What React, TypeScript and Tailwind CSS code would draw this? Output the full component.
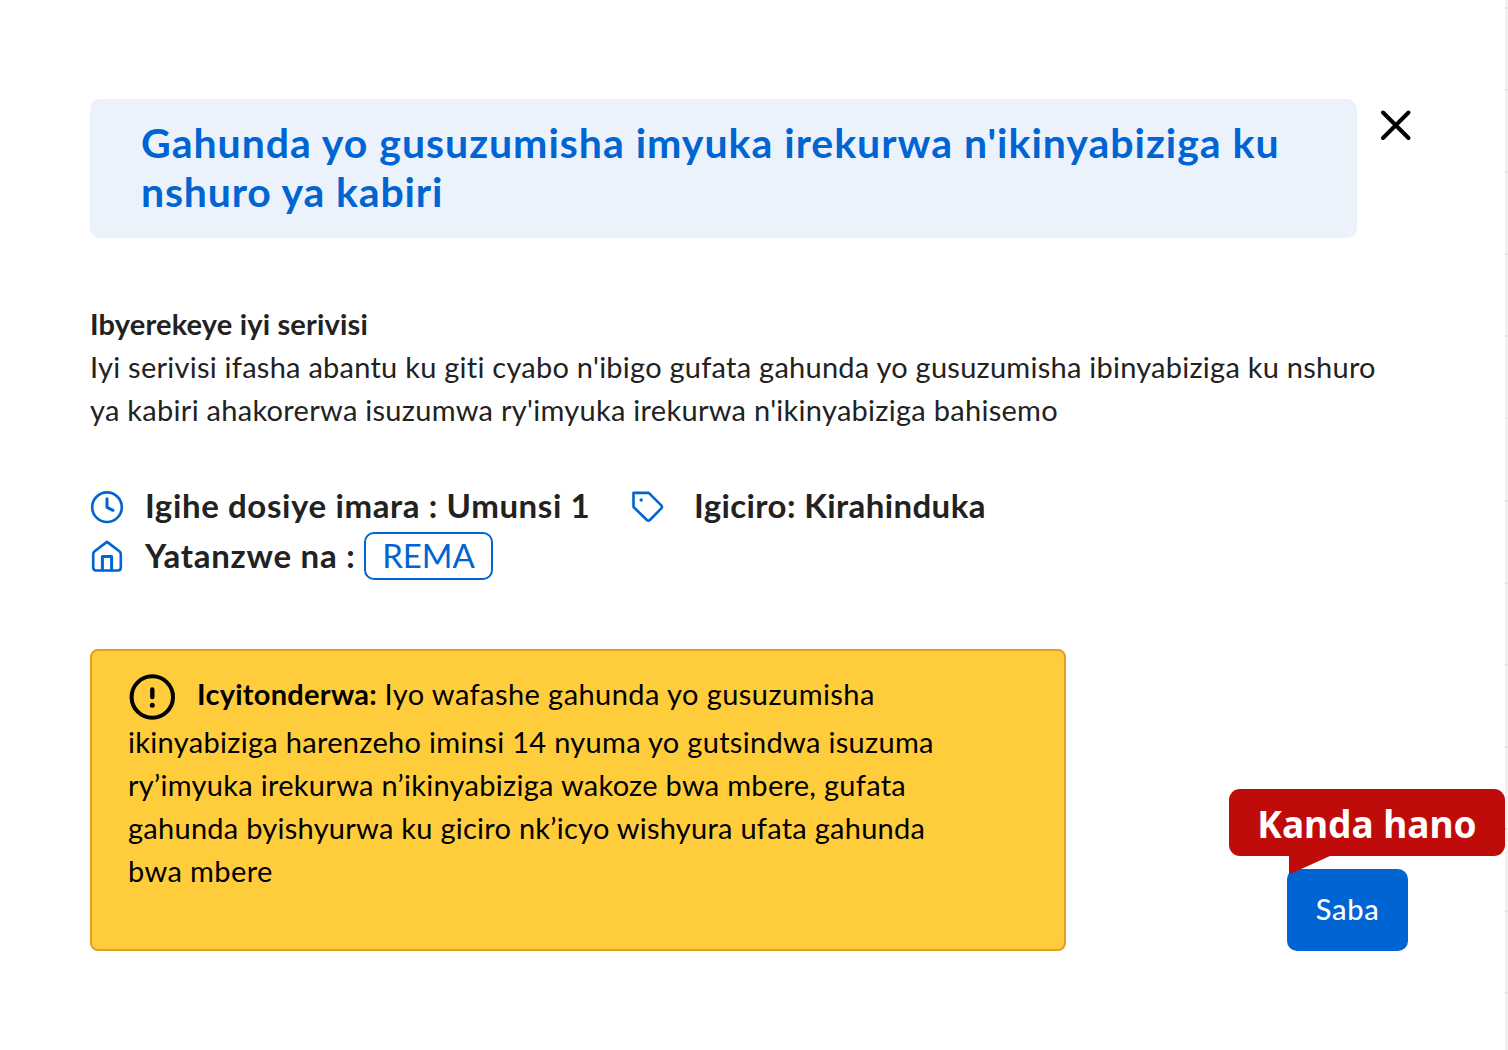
import type { ReactNode } from 'react'

interface FactProps {
  icon: ReactNode
  children: ReactNode
}

function Fact({ icon, children }: FactProps) {
  return (
    <div className="flex h-[49px] items-center">
      {icon}
      <div className="ml-[21px] flex items-center text-[33px] leading-none font-bold text-[#222]">{children}</div>
    </div>
  )
}

function ClockIcon() {
  return (
    <svg width="34" height="34" viewBox="0 0 34 34" fill="none" stroke="#0064d2" strokeWidth="2.6" strokeLinecap="round" strokeLinejoin="round">
      <circle cx="17" cy="17.2" r="14.8" />
      <path d="M17 8.7v8.6l6 3" strokeWidth="3" />
    </svg>
  )
}

function TagIcon() {
  return (
    <svg width="34" height="34" viewBox="0 0 34 34" fill="none" stroke="#0064d2" strokeWidth="2.6" strokeLinejoin="round">
      <path d="M2.5 2.9h15.2l12.6 12.5q1.3 1.5 0 3L18.9 30q-1.5 1.3-3 0L2.500 17Z" />
      <circle cx="10.2" cy="10" r="1.7" fill="#0064d2" stroke="none" />
    </svg>
  )
}

function HomeIcon() {
  return (
    <svg width="34" height="34" viewBox="0 0 34 34" fill="none" stroke="#0064d2" strokeWidth="2.6" strokeLinecap="round" strokeLinejoin="round">
      <path d="M3.2 15.2q0-1.7 1.4-2.9L17 2.9l12.4 9.4q1.4 1.2 1.4 2.9v13.3q0 3-3 3H6.200q-3 0-3-3Z" />
      <path d="M12.4 31V17.600h9.200V31" strokeWidth="3" />
    </svg>
  )
}

function AlertIcon() {
  return (
    <svg className="mt-px" width="48" height="48" viewBox="0 0 48 48" fill="none" stroke="#000" strokeLinecap="round">
      <circle cx="24.3" cy="24" r="20.7" strokeWidth="4" />
      <path d="M24.3 16.500v7.600" strokeWidth="4.400" />
      <circle cx="24.3" cy="32.3" r="2.500" fill="#000" stroke="none" />
    </svg>
  )
}

function Callout() {
  return (
    <div className="absolute -top-[80px] -left-[58px] h-[85px] w-[276px]">
      <div className="flex h-[67px] items-center justify-center rounded-[11px] bg-[#bf0c0b] pt-[2px] font-['Noto_Sans','Open_Sans',sans-serif] text-[37px] leading-none font-bold whitespace-nowrap text-white">
        Kanda hano
      </div>
      <svg className="ml-[60px] block" width="44" height="19" viewBox="0 0 44 19">
        <path d="M0 0h41L0 18.500Z" fill="#bf0c0b" />
      </svg>
    </div>
  )
}

export default function App() {
  return (
    <div className="flex h-[1050px] w-[1508px] overflow-hidden bg-white font-['Lato',sans-serif] whitespace-nowrap">
      <main className="flex flex-1 flex-col pt-[99px] pl-[90px]">
        <header className="flex items-start">
          <h1 className="h-[139px] w-[1266.5px] rounded-[10px] bg-[#ebf2fc] pt-[19px] pl-[51px] text-[41px] leading-[49px] font-bold text-[#0064d2]">
            <span className="block tracking-[0.99px]">Gahunda yo gusuzumisha imyuka irekurwa n'ikinyabiziga ku</span>
            <span className="block tracking-[0.85px]">nshuro ya kabiri</span>
          </h1>
          <button aria-label="Funga" className="mt-[10px] ml-[23px]">
            <svg width="32" height="32" viewBox="0 0 32 32" stroke="#000" strokeWidth="4" strokeLinecap="round">
              <path d="M3 3.5l25.5 25.5M28.5 3.5 3 29" />
            </svg>
          </button>
        </header>

        <section className="mt-[64px] text-[29px] leading-[43.2px] text-[#222]">
          <h2 className="font-bold tracking-[0.17px]">Ibyerekeye iyi serivisi</h2>
          <p>
            <span className="block tracking-[0.25px]">Iyi serivisi ifasha abantu ku giti cyabo n'ibigo gufata gahunda yo gusuzumisha ibinyabiziga ku nshuro</span>
            <span className="block tracking-[0.28px]">ya kabiri ahakorerwa isuzumwa ry'imyuka irekurwa n'ikinyabiziga bahisemo</span>
          </p>
        </section>

        <section className="mt-[50.4px]">
          <div className="flex">
            <div className="w-[541px]">
              <Fact icon={<ClockIcon />}>
                <span className="pb-[2px] tracking-[0.62px]">Igihe dosiye imara : Umunsi 1</span>
              </Fact>
            </div>
            <Fact icon={<TagIcon />}>
              <span className="ml-[8px] pb-[2px] tracking-[0.4px]">Igiciro: Kirahinduka</span>
            </Fact>
          </div>
          <Fact icon={<HomeIcon />}>
            <span className="w-[219px] pb-px tracking-[0.75px]">Yatanzwe na :</span>
            <span className="flex h-[48px] w-[129px] items-center justify-center rounded-[10px] border-2 border-[#0064d2] font-normal text-[#0064d2]">REMA</span>
          </Fact>
        </section>

        <div className="mt-[69px] flex items-end">
          <aside className="h-[302px] w-[976px] rounded-[8px] border-2 border-[#e59c24] bg-[#ffcd3b] pt-[21px] pl-[36px] text-[29px] leading-[43px] text-black">
            <div className="flex h-[48px]">
              <AlertIcon />
              <p className="ml-[21px]">
                <b className="tracking-[0.27px]">Icyitonderwa:</b> <span className="tracking-[0.44px]">Iyo wafashe gahunda yo gusuzumisha</span>
              </p>
            </div>
            <p>
              <span className="block tracking-[0.31px]">ikinyabiziga harenzeho iminsi 14 nyuma yo gutsindwa isuzuma</span>
              <span className="block tracking-[0.29px]">ry’imyuka irekurwa n’ikinyabiziga wakoze bwa mbere, gufata</span>
              <span className="block tracking-[0.26px]">gahunda byishyurwa ku giciro nk’icyo wishyura ufata gahunda</span>
              <span className="block tracking-[0.4px]">bwa mbere</span>
            </p>
          </aside>
          <div className="relative ml-[221px]">
            <button className="block h-[82px] w-[121px] rounded-[10px] bg-[#0064d2] pb-[3px] text-[29px] font-medium tracking-[0.7px] text-white">Saba</button>
            <Callout />
          </div>
        </div>
      </main>
      {/* page edge behind the dialog, with its table row lines */}
      <div className="w-[3px] bg-[#f1f1f1] bg-[repeating-linear-gradient(to_bottom,transparent_0_7px,#e4e4e4_7px_9px,transparent_9px_82.1px)]" />
    </div>
  )
}
